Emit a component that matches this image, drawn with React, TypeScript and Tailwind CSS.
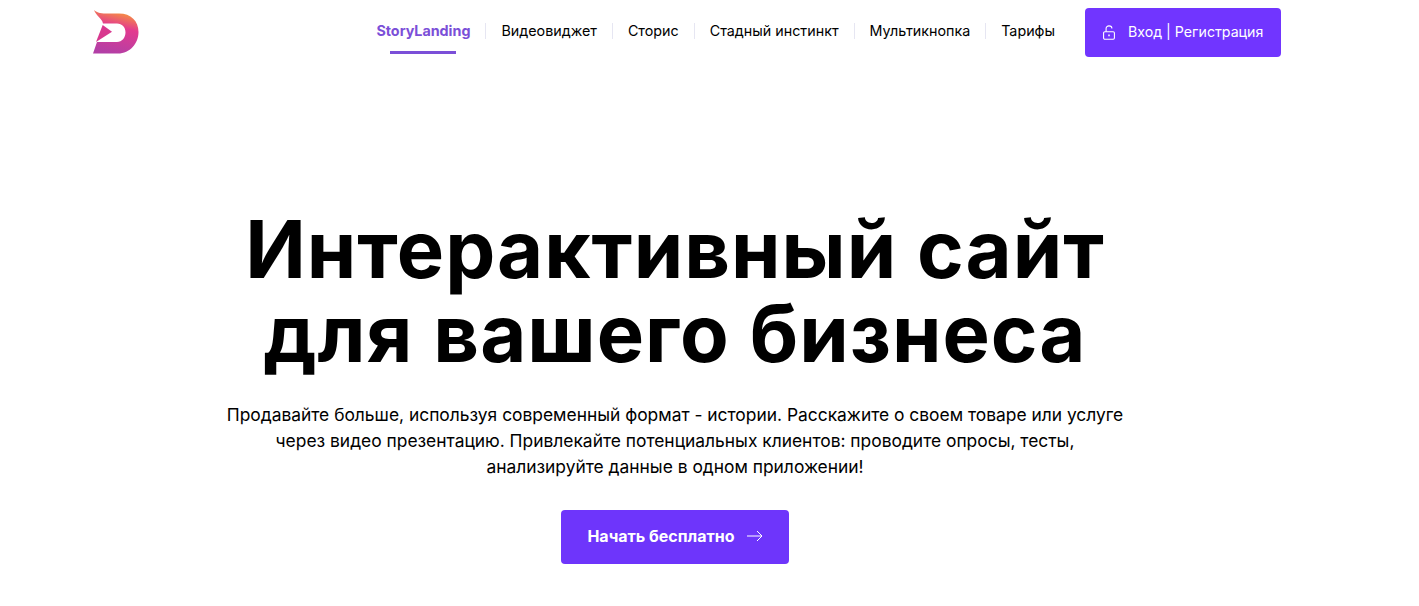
const links = ['Видеовиджет', 'Сторис', 'Стадный инстинкт', 'Мультикнопка', 'Тарифы'];

function Logo() {
  return (
    <svg width="48" height="44" viewBox="0 0 48 44" className="block">
      <defs>
        <linearGradient id="logoFill" x1="0.6" y1="0" x2="0.35" y2="1">
          <stop offset="0" stopColor="#f89a38" />
          <stop offset="0.38" stopColor="#e33a8f" />
          <stop offset="1" stopColor="#b23fa6" />
        </linearGradient>
      </defs>
      <path
        fill="url(#logoFill)"
        d="M2 0C5 3 10 3.5 16 3.5H27C39 3.5 46.5 11 46.5 22C46.5 33.5 38 43.5 26 43.5H1L5 32H25C30 32 33.5 27.5 33.5 22.5C33.5 17 30 13.5 25 13.5H11C10 8 4 6 2 0Z"
      />
      <path fill="#d8388f" d="M10.7 15L20 21.7L4 32Z" />
    </svg>
  );
}

function LockIcon() {
  return (
    <svg width="14" height="15" viewBox="0 0 16 18" fill="none" stroke="currentColor" strokeWidth="1.3" className="mr-[12px]">
      <rect x="1.5" y="8" width="13" height="9" rx="1.5" />
      <path d="M4.5 8V4.2C4.5 2.4 6 1 8 1C10 1 11.5 2.4 11.5 4.2" />
      <path d="M8 11.5V13.5" strokeWidth="1.8" />
    </svg>
  );
}

function LongArrow() {
  return (
    <svg width="16" height="12" viewBox="0 0 16 12" fill="none" stroke="currentColor" strokeWidth="1">
      <path d="M0 6H15M10 1L15 6L10 11" />
    </svg>
  );
}

export default function App() {
  return (
    <div className="w-[1350px] h-[606px] bg-white text-black font-['Inter','Liberation_Sans',sans-serif]">
      {/* Header */}
      <header className="flex items-start justify-between pl-[92px] pr-[69px]">
        <div className="pt-[10px]">
          <Logo />
        </div>
        <div className="flex items-start pt-[8px]">
          <nav className="flex items-center mr-[30px] h-[46px] text-[14.3px]">
            <a className="relative pr-[15px] font-bold text-[#7b4fd8] leading-[16px]">
              StoryLanding
              <span className="absolute left-[14px] top-[28px] w-[66px] h-[3px] bg-[#7b4fd8]" />
            </a>
            {links.map((l) => (
              <a key={l} className="border-l border-[#e6e6f2] pl-[15px] pr-[15px] leading-[16px] last:pr-0">
                {l}
              </a>
            ))}
          </nav>
          <button className="flex items-center h-[49px] w-[196px] pl-[17px] pb-[1px] rounded-[4px] bg-[#7135ff] text-white text-[14.2px]">
            <LockIcon />
            Вход | Регистрация
          </button>
        </div>
      </header>

      {/* Hero */}
      <main className="flex flex-col items-center pt-[150px]">
        <h1 className="text-[79.5px] leading-[84px] font-bold text-center tracking-[1px]">
          Интерактивный сайт
          <br />
          для вашего бизнеса
        </h1>
        <p className="mt-[27px] w-[920px] text-[17.4px] leading-[26px] text-center">
          Продавайте больше, используя современный формат - истории. Расскажите о своем товаре или услуге
          <br />
          через видео презентацию. Привлекайте потенциальных клиентов: проводите опросы, тесты,
          <br />
          анализируйте данные в одном приложении!
        </p>
        <button className="mt-[30px] flex items-center justify-center gap-[12px] w-[228px] h-[54px] pb-[2px] rounded-[4px] bg-[#6e35fb] text-white text-[16px] font-bold">
          Начать бесплатно
          <LongArrow />
        </button>
      </main>
    </div>
  );
}
